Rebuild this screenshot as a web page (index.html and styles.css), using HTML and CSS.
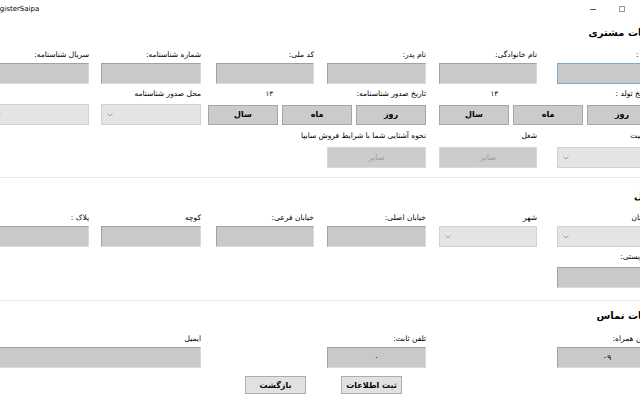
FILE: index.html
```html
<!DOCTYPE html>
<html lang="fa">
<head>
<meta charset="utf-8">
<title>RegisterSaipa</title>
<link rel="stylesheet" href="styles.css">
</head>
<body>
<div class="window">
  <div class="titlebar">
    <span class="app-title">RegisterSaipa</span>
    <div class="win-ctrl">
      <span class="w-min"></span>
      <span class="w-max"></span>
      <span class="w-close">✕</span>
    </div>
  </div>

  <h2 class="sec-title">اطلاعات مشتری</h2>
  <div class="grid g1">
    <div class="lbl lbl-f cF r1">نام :</div>
    <div class="lbl cE r1">نام خانوادگی:</div>
    <div class="lbl cD r1">نام پدر:</div>
    <div class="lbl cC r1">کد ملی:</div>
    <div class="lbl cB r1">شماره شناسنامه:</div>
    <div class="lbl cA r1">سریال شناسنامه:</div>

    <div class="tb focus cF r2"></div>
    <div class="tb cE r2"></div>
    <div class="tb cD r2"></div>
    <div class="tb cC r2"></div>
    <div class="tb cB r2"></div>
    <div class="tb cA r2"></div>

    <div class="date-lbl cFE r3">
      <span class="dl lbl-f">تاریخ تولد :</span><span class="dl"></span><span class="dl yr yr1">۱۳</span>
    </div>
    <div class="date-lbl cDC r3">
      <span class="dl">تاریخ صدور شناسنامه:</span><span class="dl"></span><span class="dl yr yr2">۱۳</span>
    </div>
    <div class="lbl cB r3">محل صدور شناسنامه</div>

    <div class="date-group cFE r4">
      <div class="dbtn">روز</div><div class="dbtn">ماه</div><div class="dbtn">سال</div>
    </div>
    <div class="date-group cDC r4">
      <div class="dbtn">روز</div><div class="dbtn">ماه</div><div class="dbtn">سال</div>
    </div>
    <div class="combo cB r4"><svg class="chev" viewBox="0 0 6 4" width="6" height="4"><polyline points="0.5,0.5 3,3 5.5,0.5" /></svg></div>
    <div class="combo cA r4"><svg class="chev" viewBox="0 0 6 4" width="6" height="4"><polyline points="0.5,0.5 3,3 5.5,0.5" /></svg></div>

    <div class="lbl lbl-f cF r5">تابعیت</div>
    <div class="lbl cE r5">شغل</div>
    <div class="lbl cD r5">نحوه آشنایی شما با شرایط فروش سایپا</div>

    <div class="combo cF r6"><svg class="chev" viewBox="0 0 6 4" width="6" height="4"><polyline points="0.5,0.5 3,3 5.5,0.5" /></svg></div>
    <div class="dis cE r6">سایر</div>
    <div class="dis cD r6">سایر</div>
  </div>

  <div class="sep sep1"></div>

  <h2 class="sec-title st2">آدرس محل</h2>
  <div class="grid g2">
    <div class="lbl lbl-f cF r1">استان</div>
    <div class="lbl cE r1">شهر</div>
    <div class="lbl cD r1">خیابان اصلی:</div>
    <div class="lbl cC r1">خیابان فرعی:</div>
    <div class="lbl cB r1">کوچه</div>
    <div class="lbl cA r1">پلاک :</div>

    <div class="combo cF r2"><svg class="chev" viewBox="0 0 6 4" width="6" height="4"><polyline points="0.5,0.5 3,3 5.5,0.5" /></svg></div>
    <div class="combo cE r2"><svg class="chev" viewBox="0 0 6 4" width="6" height="4"><polyline points="0.5,0.5 3,3 5.5,0.5" /></svg></div>
    <div class="tb cD r2"></div>
    <div class="tb cC r2"></div>
    <div class="tb cB r2"></div>
    <div class="tb cA r2"></div>

    <div class="lbl lbl-f cF r3">کد پستی:</div>
    <div class="tb cF r4"></div>
  </div>

  <div class="sep sep2"></div>

  <h2 class="sec-title st3">اطلاعات تماس</h2>
  <div class="grid g3">
    <div class="lbl lbl-f cF r1">تلفن همراه:</div>
    <div class="lbl cD r1">تلفن ثابت:</div>
    <div class="lbl cBA r1">ایمیل</div>

    <div class="tb cF r2">۰۹</div>
    <div class="tb cD r2">۰</div>
    <div class="tb cBA r2"></div>
  </div>

  <div class="actions">
    <button class="btn" type="button">ثبت اطلاعات</button>
    <button class="btn" type="button">بازگشت</button>
  </div>
</div>
</body>
</html>
```

FILE: styles.css
```css
html, body {
  margin: 0;
  padding: 0;
  overflow: hidden;
  background: #ffffff;
}

.window {
  width: 760px;
  height: 400px;
  margin-left: -20px;
  background: #ffffff;
  font-family: "DejaVu Sans", sans-serif;
  color: #000;
}

/* title bar */
.titlebar {
  height: 18px;
  display: flex;
  align-items: center;
  justify-content: space-between;
}
.app-title {
  font-family: "DejaVu Sans", sans-serif;
  font-size: 7px;
  line-height: 17px;
  padding-left: 11px;
}
.win-ctrl {
  display: flex;
  align-items: center;
  gap: 23px;
  padding-right: 86px;
}
.w-min {
  width: 6px;
  height: 1px;
  background: #555;
}
.w-max {
  width: 4px;
  height: 4px;
  border: 1px solid #9a9a9a;
}
.w-close {
  font-size: 7px;
  line-height: 8px;
  color: #333;
}

/* section titles */
.sec-title {
  margin: 0;
  direction: rtl;
  font-size: 10px;
  font-weight: bold;
  line-height: 16px;
  padding: 7px 71px 6px 0;
}
.st2 {
  padding: 10px 52px 5px 0;
}
.st3 {
  padding: 7px 71px 7px 0;
}

/* grids */
.grid {
  direction: rtl;
  display: grid;
  padding-right: 83px;
  grid-template-columns: 100px 20px 98px 13px 99px 13px 98px 15px 100px 12px 100px;
}
.g1 { grid-template-rows: 16px 21px 20px 21px 22px 21px; }
.g2 { grid-template-rows: 17px 21px 20px 21px; }
.g3 { grid-template-rows: 16px 21px; }

.cF { grid-column: 1; }
.cE { grid-column: 3; }
.cD { grid-column: 5; }
.cC { grid-column: 7; }
.cB { grid-column: 9; }
.cA { grid-column: 11; }
.cFE { grid-column: 1 / 4; }
.cDC { grid-column: 5 / 8; }
.cBA { grid-column: 9 / 12; }

.r1 { grid-row: 1; }
.r2 { grid-row: 2; }
.r3 { grid-row: 3; }
.r4 { grid-row: 4; }
.r5 { grid-row: 5; }
.r6 { grid-row: 6; }

.lbl {
  font-size: 7.5px;
  line-height: 14px;
  white-space: nowrap;
  align-self: center;
}
.lbl-f {
  padding-right: 7px;
}

.date-lbl {
  display: flex;
  gap: 4px;
  align-self: center;
  font-size: 7.5px;
  line-height: 14px;
  white-space: nowrap;
}
.dl {
  flex: 0 0 70px;
  box-sizing: border-box;
}
.yr { font-size: 7px; }
.yr1 { padding-right: 11px; }
.yr2 { padding-right: 5px; }

/* controls */
.tb {
  box-sizing: border-box;
  height: 21px;
  background: #c9c9c9;
  border: 1px solid;
  border-color: #a2a2a2 #dadada #dadada #a2a2a2;
  font-size: 8px;
  display: flex;
  align-items: center;
  justify-content: center;
}
.tb.focus {
  border-color: #7aa6d2;
}

.combo {
  box-sizing: border-box;
  height: 21px;
  background: #e4e4e4;
  border: 1px solid #d2d2d2;
  display: flex;
  align-items: center;
  direction: ltr;
  padding-left: 5px;
}
.chev {
  fill: none;
  stroke: #8a8a8a;
  stroke-width: 0.8;
}

.date-group {
  display: flex;
  gap: 4px;
  align-self: center;
}
.dbtn {
  box-sizing: border-box;
  flex: 0 0 70px;
  height: 20px;
  background: #cbcbcb;
  border: 1px solid #a5a5a5;
  font-size: 8px;
  font-weight: bold;
  display: flex;
  align-items: center;
  justify-content: center;
}

.dis {
  box-sizing: border-box;
  height: 21px;
  background: #cccccc;
  border: 1px solid #d8d8d8;
  color: #9c9c9c;
  font-size: 8px;
  display: flex;
  align-items: center;
  justify-content: center;
}

/* separators */
.sep {
  height: 0;
  border-top: 1px solid #e6e6e6;
}
.sep1 { margin-top: 9px; }
.sep2 { margin-top: 12px; }

/* bottom actions */
.actions {
  direction: rtl;
  display: flex;
  gap: 35px;
  margin-top: 8px;
  padding-right: 338px;
}
.btn {
  box-sizing: border-box;
  width: 61px;
  height: 18px;
  margin: 0;
  padding: 0;
  background: #e1e1e1;
  border: 1px solid #adadad;
  border-radius: 0;
  font-family: "DejaVu Sans", sans-serif;
  font-size: 8px;
  font-weight: bold;
  color: #000;
}
```
